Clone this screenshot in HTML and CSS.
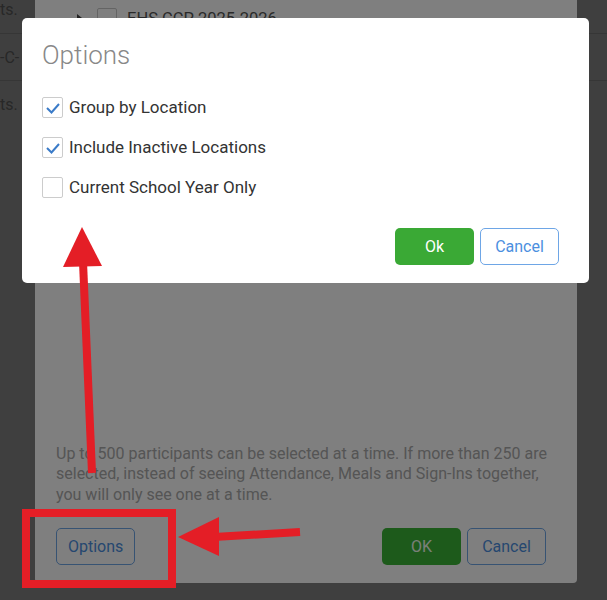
FILE: index.html
```html
<!DOCTYPE html>
<html lang="en">
<head>
<meta charset="utf-8">
<title>Options</title>
<link rel="stylesheet" href="styles.css">
</head>
<body>
  <div class="page">
    <div class="page-row"><span class="page-cell">ts.</span></div>
    <div class="page-row"><span class="page-cell">-C-</span></div>
    <div class="page-row"><span class="page-cell">ts.</span></div>
  </div>

  <div class="overlay"></div>

  <div class="modal">
    <div class="tree">
      <div class="tree-row">
        <svg class="chevron" width="5" height="8" viewBox="0 0 5 8"><polygon points="0,0 5,4 0,8"/></svg>
        <span class="tree-box"></span>
        <span class="tree-label">EHS CCP 2025-2026</span>
      </div>
    </div>
    <p class="note">Up to 500 participants can be selected at a time. If more than 250 are selected, instead of seeing Attendance, Meals and Sign-Ins together, you will only see one at a time.</p>
    <div class="modal-footer">
      <button class="btn btn-outline">Options</button>
      <div class="footer-actions">
        <button class="btn btn-green-back">OK</button>
        <button class="btn btn-outline">Cancel</button>
      </div>
    </div>
  </div>

  <div class="overlay"></div>

  <div class="dialog">
    <h2 class="dialog-title">Options</h2>
    <label class="check-row">
      <span class="check-box"><svg width="21" height="21" viewBox="0 0 21 21"><polyline points="5,11 9.5,15.5 17,7"/></svg></span>
      <span>Group by Location</span>
    </label>
    <label class="check-row">
      <span class="check-box"><svg width="21" height="21" viewBox="0 0 21 21"><polyline points="5,11 9.5,15.5 17,7"/></svg></span>
      <span>Include Inactive Locations</span>
    </label>
    <label class="check-row">
      <span class="check-box"></span>
      <span>Current School Year Only</span>
    </label>
    <div class="dialog-footer">
      <button class="btn btn-green">Ok</button>
      <button class="btn btn-outline">Cancel</button>
    </div>
  </div>

  <svg class="annotations" width="607" height="600" viewBox="0 0 607 600">
    <rect x="26" y="513" width="146" height="71" fill="none" stroke="#e41e26" stroke-width="8"/>
    <line x1="300" y1="532" x2="214" y2="537" stroke="#e41e26" stroke-width="8"/>
    <polygon points="178,537 219,517 219,556" fill="#e41e26"/>
    <line x1="92" y1="473" x2="83" y2="262" stroke="#e41e26" stroke-width="8"/>
    <polygon points="82,227 63,267 102,266" fill="#e41e26"/>
  </svg>
</body>
</html>
```

FILE: styles.css
```css
* { box-sizing: border-box; }

html, body {
  margin: 0;
  padding: 0;
  width: 607px;
  height: 600px;
  overflow: hidden;
  background: #ffffff;
  font-family: Roboto, "Noto Sans", sans-serif;
}

/* underlying page */
.page {
  margin-top: -14px;
}
.page-row {
  height: 47px;
  display: flex;
  align-items: center;
  font-size: 16px;
  color: #a0a0a0;
}
.page-row + .page-row {
  border-top: 1px solid #d8d8d8;
}
.page-cell {
  padding-left: 0;
}

.overlay {
  position: fixed;
  inset: 0;
  background: rgba(0, 0, 0, 0.5);
}

/* first modal (behind) */
.modal {
  position: fixed;
  left: 35px;
  right: 30px;
  top: -20px;
  bottom: 17px;
  background: #ffffff;
  border-radius: 4px;
  padding: 0 21px 18px;
  display: flex;
  flex-direction: column;
}
.tree {
  flex: 1;
  padding-top: 28px;
}
.tree-row {
  display: flex;
  align-items: center;
  height: 20px;
  padding-left: 21px;
}
.chevron {
  fill: #444;
  margin-right: 15px;
}
.tree-box {
  width: 20px;
  height: 20px;
  border: 1px solid #c8c8c8;
  border-radius: 2px;
  margin-right: 10px;
}
.tree-label {
  font-size: 16.5px;
  color: #555;
}
.note {
  margin: 0;
  font-size: 16px;
  line-height: 20.5px;
  color: #aaaaaa;
}
.modal-footer {
  margin-top: 23px;
  display: flex;
  justify-content: space-between;
  padding-right: 10px;
}
.footer-actions {
  display: flex;
  gap: 6px;
}

/* buttons */
.btn {
  font-family: inherit;
  font-size: 16px;
  height: 37px;
  min-width: 79px;
  border-radius: 5px;
  border: 1px solid transparent;
  padding: 0 11px;
  cursor: pointer;
}
.btn-outline {
  background: #ffffff;
  border-color: #6ea6e6;
  color: #4b8fe0;
}
.btn-green {
  background: #3aa935;
  color: #ffffff;
}
.btn-green-back {
  background: #3ab536;
  color: #f4fff2;
}

/* options dialog */
.dialog {
  position: fixed;
  left: 22px;
  top: 18px;
  width: 567px;
  background: #ffffff;
  border-radius: 5px;
  padding: 22px 30px 18px 20px;
}
.dialog-title {
  margin: 0 0 17px;
  font-size: 26px;
  line-height: 30px;
  font-weight: 300;
  color: #888888;
}
.check-row {
  display: flex;
  align-items: center;
  height: 40px;
  font-size: 17px;
  color: #333333;
}
.check-box {
  width: 21px;
  height: 21px;
  border: 1px solid #cccccc;
  border-radius: 2px;
  margin-right: 6px;
  position: relative;
}
.check-box svg {
  position: absolute;
  left: -1px;
  top: -1px;
  fill: none;
  stroke: #3a7bc8;
  stroke-width: 2;
}
.dialog-footer {
  margin-top: 21px;
  display: flex;
  justify-content: flex-end;
  gap: 6px;
}

.annotations {
  position: fixed;
  left: 0;
  top: 0;
  pointer-events: none;
}
```
